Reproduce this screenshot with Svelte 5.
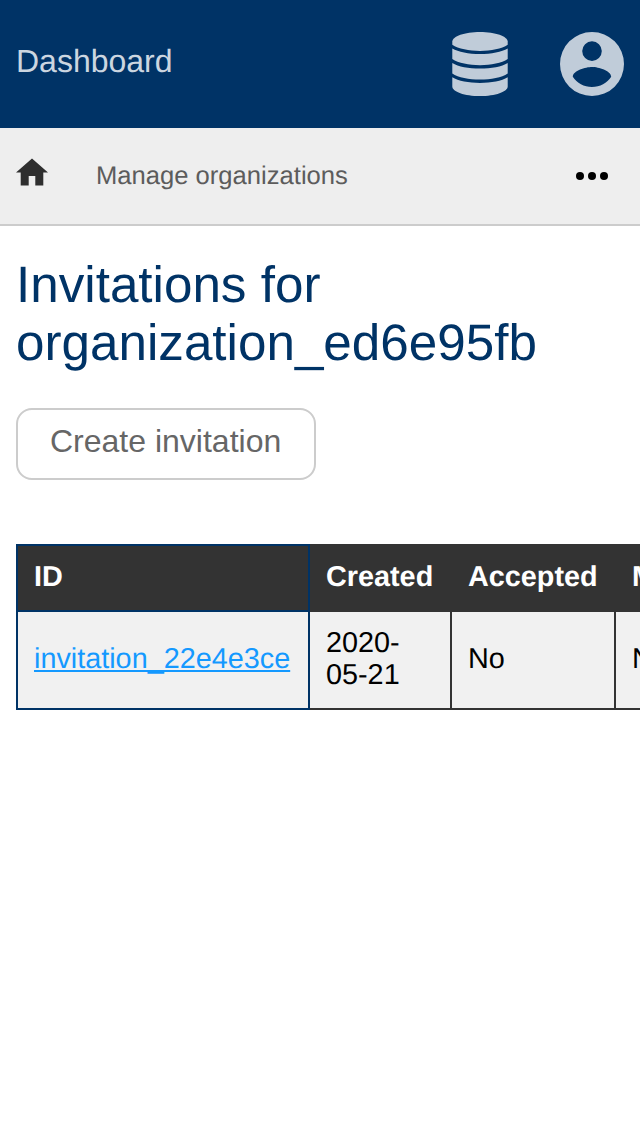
<script>
  const headings = ['ID', 'Created', 'Accepted', 'Message'];
  const rows = [{ id: 'invitation_22e4e3ce', created: '2020-05-21', accepted: 'No', message: 'No' }];
</script>

<div class="page">
  <header>
    <a class="brand" href="#top">Dashboard</a>
    <nav class="tools">
      <svg width="56" height="64" viewBox="-0.3 0 56.600 64" preserveAspectRatio="none" aria-hidden="true">
        <path d="M28 0C43.500 0 56 4.400 56 9.600V12.800C50 16.800 39 18.900 28 18.900S6 16.800 0 12.800V9.600C0 4.400 12.500 0 28 0Z" />
        <path d="M0 16.500C6 20 16.500 22.100 28 22.100S50 20 56 16.500V27C50 31 39 33.200 28 33.200S6 31 0 27Z" />
        <path d="M0 30.900C6 34.500 16.500 36.600 28 36.600S50 34.500 56 30.900V41.400C50 45.400 39 47.600 28 47.600S6 45.400 0 41.400Z" />
        <path d="M0 45.300C6 48.900 16.500 51 28 51S50 48.900 56 45.300V54.400C56 59.700 43.500 64 28 64S0 59.700 0 54.400Z" />
      </svg>
      <svg width="64" height="64" viewBox="0 0 64 64" aria-hidden="true">
        <path fill-rule="evenodd" d="M32 0a32 32 0 1 0 0 64a32 32 0 1 0 0-64ZM32 9.300a9.800 9.800 0 1 1 0 19.600a9.800 9.800 0 1 1 0-19.600ZM32 55.040c-8 0-15.070-4.100-19.200-10.300c.1-6.370 12.800-9.860 19.200-9.860s19.100 3.490 19.200 9.860c-4.130 6.200-11.200 10.300-19.200 10.300Z" />
      </svg>
    </nav>
  </header>

  <div class="crumbs">
    <svg class="home" width="32" height="28" viewBox="0 0 32 28" aria-hidden="true">
      <path d="M16 0.400L32 14.400H27.300V27.600H19.300V18H12.700V27.600H4.700V14.400H0Z" />
    </svg>
    <a href="#organizations">Manage organizations</a>
    <svg class="more" width="32" height="8" viewBox="0 0 32 8" aria-hidden="true">
      <circle cx="4" cy="4" r="4" /><circle cx="16" cy="4" r="4" /><circle cx="28" cy="4" r="4" />
    </svg>
  </div>

  <main>
    <h1>Invitations for organization_ed6e95fb</h1>
    <button>Create invitation</button>
    <div class="table">
      {#each headings as heading}
        <div class="cell head">{heading}</div>
      {/each}
      {#each rows as row}
        <div class="cell"><a href="#invitation">{row.id}</a></div>
        <div class="cell">{row.created}</div>
        <div class="cell">{row.accepted}</div>
        <div class="cell">{row.message}</div>
      {/each}
    </div>
  </main>
</div>

<style>
  .page {
    box-sizing: border-box;
    width: 640px;
    height: 1136px;
    overflow: hidden;
    background: #fff;
    color: #000;
    font-family: "Liberation Sans", Arial, sans-serif;
    text-rendering: geometricPrecision;
  }
  header {
    display: flex;
    justify-content: space-between;
    align-items: center;
    height: 128px;
    box-sizing: border-box;
    padding: 0 16px;
    background: #003366;
  }
  .brand {
    color: #ccd6e0;
    font-size: 32px;
    line-height: 36px;
    padding-bottom: 6px;
    text-decoration: none;
  }
  .tools {
    display: flex;
    gap: 52px;
  }
  .tools svg {
    fill: #c0ccd9;
  }
  .crumbs {
    display: flex;
    align-items: center;
    height: 98px;
    box-sizing: border-box;
    padding: 0 32px 0 16px;
    border-bottom: 2px solid #ccc;
    background: #eee;
  }
  .crumbs a {
    flex: 1;
    margin-left: 48px;
    color: #5c5c5c;
    font-size: 25.6px;
    line-height: 30px;
    text-decoration: none;
  }
  .home {
    fill: #2e2e2e;
    margin-bottom: 8px;
  }
  main {
    padding: 30px 0 0 16px;
  }
  h1 {
    margin: 0 16px 36px 0;
    color: #003366;
    font-size: 51.2px;
    font-weight: 400;
    line-height: 58px;
  }
  button {
    display: block;
    box-sizing: border-box;
    width: 300px;
    height: 72px;
    padding: 0 0 6px 32px;
    border: 2px solid #ccc;
    border-radius: 16px;
    background: #fff;
    color: #666;
    font: 32px "Liberation Sans", Arial, sans-serif;
    text-align: left;
  }
  .table {
    display: grid;
    grid-template-columns: 294px 142px 164px 190px;
    grid-template-rows: 68px 98px;
    margin-top: 64px;
    font-size: 28.8px;
    line-height: 32px;
  }
  .cell {
    display: flex;
    align-items: center;
    box-sizing: border-box;
    padding: 0 16px 2px;
    border: solid #333;
    border-width: 0 2px 2px 0;
    background: #f1f1f1;
  }
  .head {
    border-top-width: 2px;
    background: #333;
    color: #fff;
    font-weight: 700;
  }
  .cell:nth-child(4n + 1) {
    border-color: #003366;
    border-left-width: 2px;
  }
  .cell a {
    color: #1499ff;
    text-decoration-skip-ink: none;
  }
</style>
